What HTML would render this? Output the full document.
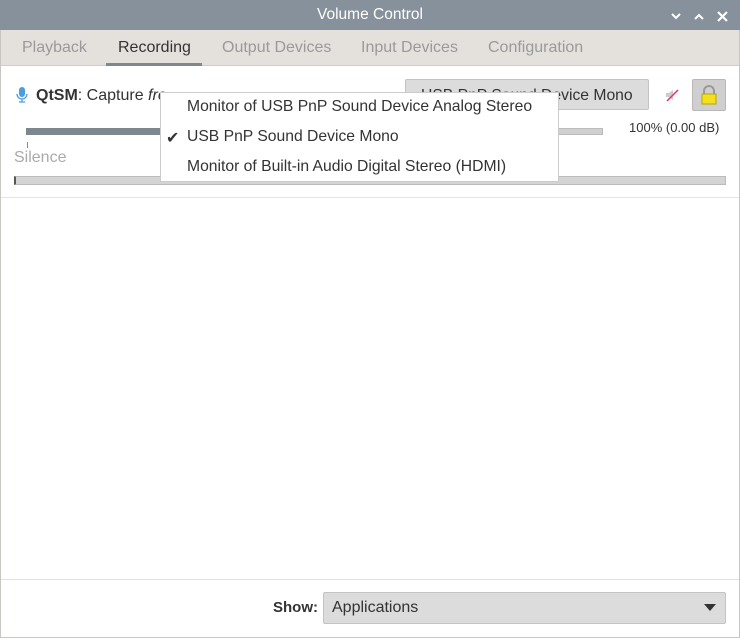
<!DOCTYPE html><html><head><style>
body{margin:0;width:740px;height:638px;position:relative;overflow:hidden;background:#fff;font-family:"Liberation Sans",sans-serif;color:#333}
div,span{position:absolute;box-sizing:border-box}
.t{white-space:nowrap}
.m{font-size:15.7px}
</style></head><body>
<div style="left:0;top:0;width:740px;height:30px;background:#87919b"></div>
<div class="t" style="left:0;width:740px;top:6px;text-align:center;color:#fff;font-size:15.5px">Volume Control</div>
<svg style="position:absolute;left:671px;top:11px" width="60" height="12"><path d="M1 3l4 4 4-4M24 8l4-4 4 4" stroke="#fff" stroke-width="2" fill="none"/><path d="M47 1l9 9M56 1l-9 9" stroke="#fff" stroke-width="2.2"/></svg>
<div style="left:0;top:30px;width:740px;height:608px;border:1px solid #c8c6c2;border-top:0"></div>
<div style="left:1px;top:30px;width:738px;height:36px;background:#e4e1dd;border-bottom:1px solid #d0cdc9"></div>
<div style="left:106px;top:63px;width:96px;height:3px;background:#7e8690"></div>
<div class="t" style="left:22px;top:39px;font-size:16px;color:#9a9a9a">Playback</div>
<div class="t" style="left:118px;top:39px;font-size:16px;color:#333">Recording</div>
<div class="t" style="left:222px;top:39px;font-size:16px;color:#9a9a9a">Output Devices</div>
<div class="t" style="left:361px;top:39px;font-size:16px;color:#9a9a9a">Input Devices</div>
<div class="t" style="left:488px;top:39px;font-size:16px;color:#9a9a9a">Configuration</div>
<svg style="position:absolute;left:16px;top:87px" width="12" height="17"><rect x="3" y="0" width="6" height="10" rx="3" fill="#4a9ee0"/><path d="M1 7a5 5 0 0 0 10 0M6 12v3M3 15h6" stroke="#4a9ee0" fill="none" stroke-width="1.3"/></svg>
<div class="t" style="left:36px;top:87px;font-size:16px"><b>QtSM</b>: Capture <i>fro</i></div>
<div style="left:405px;top:79px;width:244px;height:31px;background:#dcdcdc;border:1px solid #c4c4c4;border-radius:2px"></div>
<div class="t m" style="left:421px;top:87px">USB PnP Sound Device Mono</div>
<svg style="position:absolute;left:665px;top:88px" width="14" height="14"><path d="M1 5h3l4-3v10l-4-3H1z" fill="#ccc"/><path d="M2 13L13 2" stroke="#e0306a" stroke-width="1.5"/></svg>
<div style="left:692px;top:79px;width:34px;height:32px;background:#cfcfcf;border:1px solid #b8b8b8;border-radius:2px"></div>
<svg style="position:absolute;left:699px;top:85px" width="20" height="20"><path d="M5 9V6a5 5 0 0 1 10 0v3" stroke="#999" stroke-width="2" fill="none"/><rect x="3" y="9" width="14" height="10" fill="#f5e020" stroke="#b8a400"/></svg>
<div style="left:26px;top:128px;width:577px;height:7px;background:#d0d0d0;border:1px solid #bbb"></div>
<div style="left:26px;top:128px;width:140px;height:7px;background:#7e8690"></div>
<div style="left:27px;top:142px;width:1px;height:6px;background:#888"></div>
<div class="t" style="left:629px;top:120px;font-size:13px">100% (0.00 dB)</div>
<div class="t" style="left:14px;top:149px;font-size:16px;color:#aaa">Silence</div>
<div style="left:14px;top:176px;width:712px;height:9px;background:#d4d4d4;border:1px solid #bbb;border-left:2px solid #555"></div>
<div style="left:1px;top:197px;width:738px;height:1px;background:#e4e4e4"></div>
<div style="left:160px;top:92px;width:399px;height:90px;background:#fff;border:1px solid #ccc"></div>
<div class="t m" style="left:187px;top:98px">Monitor of USB PnP Sound Device Analog Stereo</div>
<div class="t" style="left:166px;top:128px;font-size:16px">✔</div>
<div class="t m" style="left:187px;top:128px">USB PnP Sound Device Mono</div>
<div class="t m" style="left:187px;top:158px">Monitor of Built-in Audio Digital Stereo (HDMI)</div>
<div style="left:1px;top:579px;width:738px;height:1px;background:#e0e0e0"></div>
<div class="t" style="left:273px;top:599px;font-size:15px;font-weight:bold">Show:</div>
<div style="left:323px;top:592px;width:403px;height:32px;background:#dcdcdc;border:1px solid #c4c4c4;border-radius:2px"></div>
<div class="t" style="left:332px;top:599px;font-size:16px">Applications</div>
<svg style="position:absolute;left:704px;top:604px" width="12" height="7"><path d="M0 0h12L6 7z" fill="#333"/></svg>
</body></html>
